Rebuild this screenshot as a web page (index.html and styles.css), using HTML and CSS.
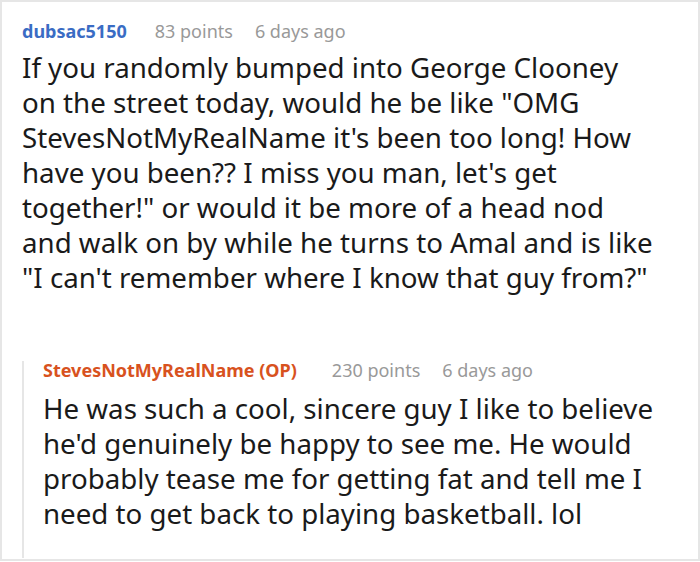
FILE: index.html
```html
<!DOCTYPE html>
<html>
<head>
<meta charset="utf-8">
<link rel="stylesheet" href="styles.css">
</head>
<body>
<div class="card">
  <div class="comment">
    <div class="meta">
      <span class="author">dubsac5150</span>
      <span class="info">83 points</span>
      <span class="info">6 days ago</span>
    </div>
    <p class="text">If you randomly bumped into George Clooney<br>on the street today, would he be like "OMG<br>StevesNotMyRealName it's been too long! How<br>have you been?? I miss you man, let's get<br>together!" or would it be more of a head nod<br>and walk on by while he turns to Amal and is like<br>"I can't remember where I know that guy from?"</p>
    <div class="reply">
      <div class="meta">
        <span class="author op">StevesNotMyRealName (OP)</span>
        <span class="info">230 points</span>
        <span class="info">6 days ago</span>
      </div>
      <p class="text">He was such a cool, sincere guy I like to believe<br>he'd genuinely be happy to see me. He would<br>probably tease me for getting fat and tell me I<br>need to get back to playing basketball. lol</p>
    </div>
  </div>
</div>
</body>
</html>
```

FILE: styles.css
```css
html, body {
  margin: 0;
  padding: 0;
  background: #fff;
}
.card {
  box-sizing: border-box;
  width: 700px;
  height: 561px;
  border: 2px solid #e6e6e6;
  overflow: hidden;
  font-family: "Noto Sans", sans-serif;
}
.comment {
  padding: 16px 0 0 20px;
}
.meta {
  display: flex;
  gap: 22px;
  font-size: 18px;
  line-height: 26px;
}
.author {
  font-weight: 700;
  color: #3a6cc4;
  margin-right: 6px;
}
.reply .author {
  margin-right: 13px;
}
.reply .meta {
  line-height: 18px;
}
.author.op {
  color: #d8521e;
}
.info {
  color: #999;
}
.text {
  margin: 6px 0 0 0;
  font-size: 27.7px;
  line-height: 35px;
  color: #1a1a1a;
  white-space: nowrap;
}
.reply {
  margin-top: 66px;
  border-left: 2px solid #e6e6e6;
  padding: 0 0 27px 19px;
}
.reply .text {
  margin-top: 12px;
}
```
